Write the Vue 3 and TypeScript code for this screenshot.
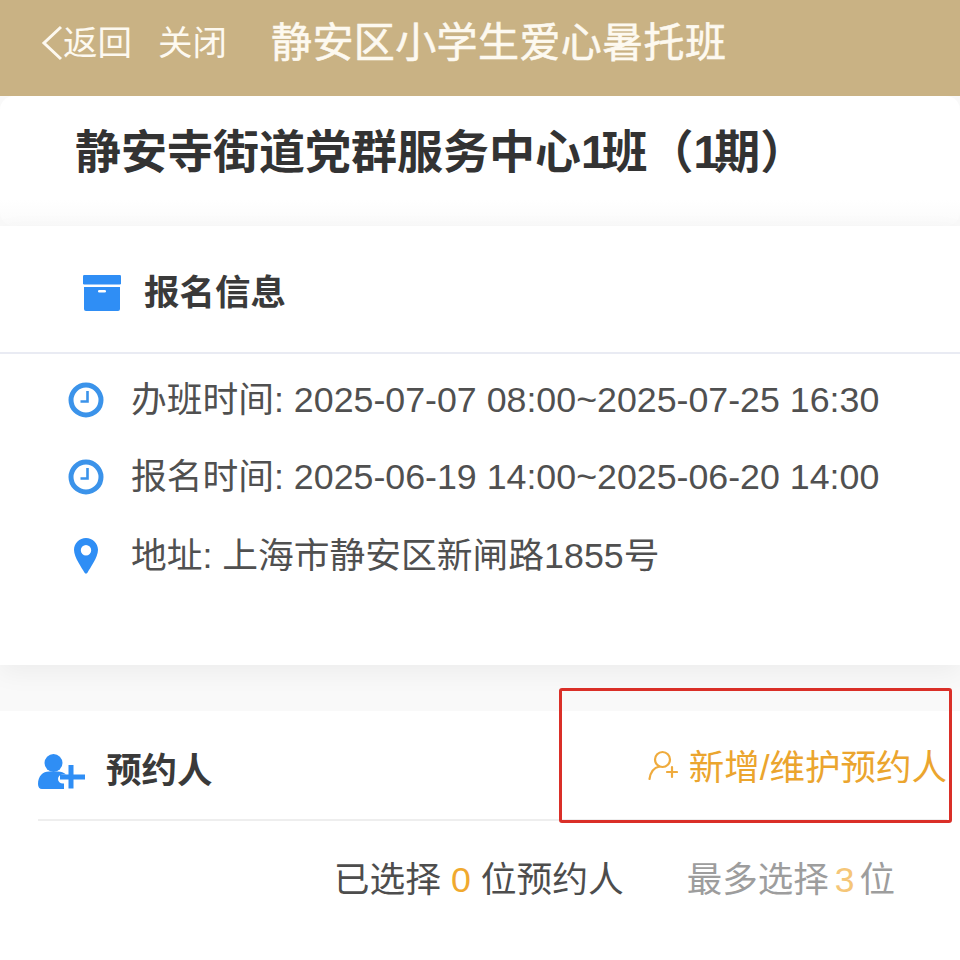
<script setup lang="ts">
interface InfoRow { icon: 'clock' | 'pin'; text: string }
const rows: InfoRow[] = [
  { icon: 'clock', text: '办班时间: 2025-07-07 08:00~2025-07-25 16:30' },
  { icon: 'clock', text: '报名时间: 2025-06-19 14:00~2025-06-20 14:00' },
  { icon: 'pin', text: '地址: 上海市静安区新闸路1855号' },
]
</script>

<template>
  <div class="page">
    <header class="nav">
      <svg class="back" viewBox="0 0 22 36" aria-hidden="true"><path d="M20 2 3 18l17 16" /></svg>
      <span class="nav-link">返回</span>
      <span class="nav-link close">关闭</span>
      <span class="nav-title">静安区小学生爱心暑托班</span>
    </header>

    <section class="title-card">
      <h1>静安寺街道党群服务中心<span class="digit">1</span>班（<span class="digit">1</span>期）</h1>
    </section>

    <section class="info-card">
      <div class="info-head">
        <svg class="box" viewBox="0 0 38 36" aria-hidden="true">
          <rect x="0" y="0" width="38" height="9.5" rx="1.2" fill="#2f8ef5" />
          <path d="M1 12h36v22a2 2 0 0 1-2 2H3a2 2 0 0 1-2-2z" fill="#2f8ef5" />
          <rect x="15" y="15" width="8" height="2.6" rx="1.3" fill="#fff" />
        </svg>
        <h2>报名信息</h2>
      </div>
      <ul class="info-list">
        <li v-for="row in rows" :key="row.text">
          <svg v-if="row.icon === 'clock'" class="row-icon" viewBox="0 0 36 36" aria-hidden="true">
            <circle cx="18" cy="18" r="15" fill="none" stroke="#3b93ea" stroke-width="5" />
            <path d="M19.500 9v10.500h-7" fill="none" stroke="#3b93ea" stroke-width="2.600" />
          </svg>
          <svg v-else class="row-icon" viewBox="0 0 36 36" aria-hidden="true">
            <path fill-rule="evenodd" fill="#2f8ef5" d="M18 0c6.600 0 12 5.200 12 11.800 0 7.800-8 18.200-10.400 22.800-.7 1.400-2.500 1.400-3.200 0C14 30 6 19.600 6 11.800 6 5.200 11.400 0 18 0zm0 7a5.200 5.200 0 1 0 0 10.400A5.200 5.200 0 0 0 18 7z" />
          </svg>
          <span>{{ row.text }}</span>
        </li>
      </ul>
    </section>

    <section class="person-card">
      <div class="person-head">
        <div class="person-label">
          <svg class="person-icon" viewBox="0 0 48 36" aria-hidden="true">
            <circle cx="15.500" cy="10" r="9" fill="#2f8ef5" />
            <path d="M0 31c0-8 5-12.500 11-12.500h9c3 0 6 1 8 3h-3c-3 0-5 2-5 4.500s2 4.500 5 4.500h1v5.500H4c-2.500 0-4-2-4-5z" fill="#2f8ef5" />
            <path d="M33 12v23.500M22 24h25" stroke="#2f8ef5" stroke-width="5" fill="none" />
          </svg>
          <h2>预约人</h2>
        </div>
        <div class="person-action">
          <svg class="add-icon" viewBox="0 0 30 32" aria-hidden="true">
            <circle cx="14.500" cy="9.500" r="7.500" fill="none" stroke="#efab3d" stroke-width="2.200" />
            <path d="M1.500 29c1-7 5-11.500 10-12.500M19 22h10M24 17v10" fill="none" stroke="#efab3d" stroke-width="2.200" stroke-linecap="round" />
          </svg>
          <span class="action-text">新增/维护预约人</span>
        </div>
      </div>
      <div class="count-row">
        <span class="selected">已选择 <b>0</b> 位预约人</span>
        <span class="limit">最多选择<b>3</b>位</span>
      </div>
      <div class="highlight"></div>
    </section>
  </div>
</template>

<style scoped>
.page {
  position: relative;
  width: 960px;
  height: 960px;
  overflow: hidden;
  background: #f9f9f9;
  font-family: "Liberation Sans", "Noto Sans CJK SC", sans-serif;
  color: #4d4d4d;
}
h1, h2, ul { margin: 0; padding: 0; }
.nav {
  height: 96px;
  display: flex;
  align-items: center;
  padding: 0 0 10px 41px;
  box-sizing: border-box;
  background: #c9b284;
  color: #fdf9f0;
}
.back { width: 22px; height: 36px; fill: none; stroke: #fdf9f0; stroke-width: 3; }
.nav-link { font-size: 34.500px; line-height: 40px; }
.close { margin-left: 26px; }
.nav-title {
  margin-left: 44px;
  font-size: 41px;
  letter-spacing: .4px;
  line-height: 52px;
  -webkit-text-stroke: .6px #fdf9f0;
}
.title-card {
  height: 130px;
  padding: 28px 0 0 75px;
  box-sizing: border-box;
  border-radius: 14px;
  background: linear-gradient(#fff 80%, #fafafa);
}
h1 { font-size: 46px; line-height: 56px; font-weight: 700; color: #333; white-space: nowrap; }
.digit { letter-spacing: -5px; }
.info-card {
  position: relative;
  height: 439px;
  background: #fff;
  box-shadow: 0 8px 24px rgba(0, 0, 0, .05);
}
.info-head {
  height: 128px;
  display: flex;
  align-items: center;
  padding: 7px 0 0 83px;
  box-sizing: border-box;
  border-bottom: 2px solid #e9ebf3;
}
.box { width: 38px; height: 36px; }
h2 { font-size: 35.500px; font-weight: 700; color: #3a3a3a; line-height: 44px; }
.info-head h2 { margin-left: 23px; }
.info-list { list-style: none; padding: 4px 0 0 68px; }
.info-list li {
  height: 77px;
  display: flex;
  align-items: center;
  gap: 27px;
  font-size: 35.750px;
  color: #505050;
  white-space: nowrap;
}
.info-list li:last-child { padding-top: 2px; }
.row-icon { width: 36px; height: 36px; flex: none; margin-top: 6px; }
.person-card {
  margin-top: 46px;
  height: 249px;
  padding: 0 13px 0 38px;
  box-sizing: border-box;
  background: #fff;
}
.person-head {
  height: 110px;
  display: flex;
  align-items: center;
  justify-content: space-between;
  border-bottom: 2px solid #eeeeee;
  padding-top: 12px;
  box-sizing: border-box;
}
.person-label { display: flex; align-items: center; gap: 20px; }
.person-icon { width: 48px; height: 36px; }
.person-action {
  display: flex;
  align-items: center;
  gap: 11px;
  margin-top: -10px;
  font-size: 35.500px;
  color: #eba52e;
  white-space: nowrap;
}
.action-text { margin-top: -4px; }
.add-icon { width: 30px; height: 32px; }
.count-row {
  display: flex;
  justify-content: flex-end;
  gap: 63px;
  padding: 36px 52px 0 0;
  font-size: 35.500px;
  line-height: 46px;
  white-space: nowrap;
}
.selected { font-size: 35.750px; }
.count-row b { font-weight: 400; color: #f0a92f; }
.limit { color: #9d9d9d; }
.limit b { color: #f5c678; margin: 0 5px 0 6px; }
.highlight {
  position: absolute;
  left: 559px;
  top: 688px;
  width: 393px;
  height: 135px;
  box-sizing: border-box;
  border: 3px solid #da2f28;
  border-radius: 3px;
}
</style>
